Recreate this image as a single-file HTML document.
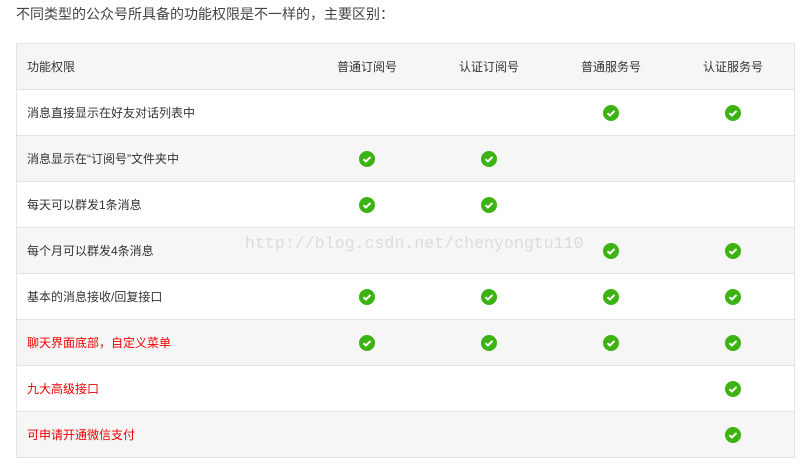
<!DOCTYPE html>
<html><head><meta charset="utf-8"><style>
body{margin:0;background:#fff;width:810px;height:469px;overflow:hidden;position:relative;font-family:"Liberation Sans","Noto Sans CJK SC",sans-serif;color:#333}
.t{position:absolute;left:16px;top:4px;font-size:14px;line-height:20px;color:#444}
table{position:absolute;left:16px;top:43px;border-collapse:collapse;font-size:12px;color:#333}
td{height:45px;border:1px solid #e4e4e4;border-left:none;border-right:none;padding:0;text-align:center;vertical-align:middle}
td:first-child{text-align:left;padding-left:10px;width:279px;border-left:1px solid #e4e4e4}
td:last-child{border-right:1px solid #e4e4e4}
td.c{width:122px}
tr:nth-child(odd) td{background:#f6f6f6}
.r{color:#e00}
.k{display:inline-block;width:16px;height:16px;vertical-align:middle}
.w{position:absolute;left:245px;top:234px;font-family:"Liberation Mono",monospace;font-size:16.6px;color:#dcdcdc}
</style></head><body>
<div class="t">不同类型的公众号所具备的功能权限是不一样的，主要区别：</div>
<svg width="0" height="0" style="position:absolute"><defs><symbol id="ck" viewBox="0 0 16 16"><circle cx="8" cy="8" r="8" fill="#3cb312"/><path d="M4.5 8.2l2.4 2.3 4.6-4.6" stroke="#fff" stroke-width="2" fill="none"/></symbol></defs></svg>
<table>
<tr><td>功能权限</td><td class="c">普通订阅号</td><td class="c">认证订阅号</td><td class="c">普通服务号</td><td class="c">认证服务号</td></tr>
<tr><td>消息直接显示在好友对话列表中</td><td></td><td></td><td><svg class="k"><use href="#ck"/></svg></td><td><svg class="k"><use href="#ck"/></svg></td></tr>
<tr><td>消息显示在“订阅号”文件夹中</td><td><svg class="k"><use href="#ck"/></svg></td><td><svg class="k"><use href="#ck"/></svg></td><td></td><td></td></tr>
<tr><td>每天可以群发1条消息</td><td><svg class="k"><use href="#ck"/></svg></td><td><svg class="k"><use href="#ck"/></svg></td><td></td><td></td></tr>
<tr><td>每个月可以群发4条消息</td><td></td><td></td><td><svg class="k"><use href="#ck"/></svg></td><td><svg class="k"><use href="#ck"/></svg></td></tr>
<tr><td>基本的消息接收/回复接口</td><td><svg class="k"><use href="#ck"/></svg></td><td><svg class="k"><use href="#ck"/></svg></td><td><svg class="k"><use href="#ck"/></svg></td><td><svg class="k"><use href="#ck"/></svg></td></tr>
<tr><td class="r">聊天界面底部，自定义菜单</td><td><svg class="k"><use href="#ck"/></svg></td><td><svg class="k"><use href="#ck"/></svg></td><td><svg class="k"><use href="#ck"/></svg></td><td><svg class="k"><use href="#ck"/></svg></td></tr>
<tr><td class="r">九大高级接口</td><td></td><td></td><td></td><td><svg class="k"><use href="#ck"/></svg></td></tr>
<tr><td class="r">可申请开通微信支付</td><td></td><td></td><td></td><td><svg class="k"><use href="#ck"/></svg></td></tr>
</table>
<div class="w">http://blog.csdn.net/chenyongtu110</div>
</body></html>
